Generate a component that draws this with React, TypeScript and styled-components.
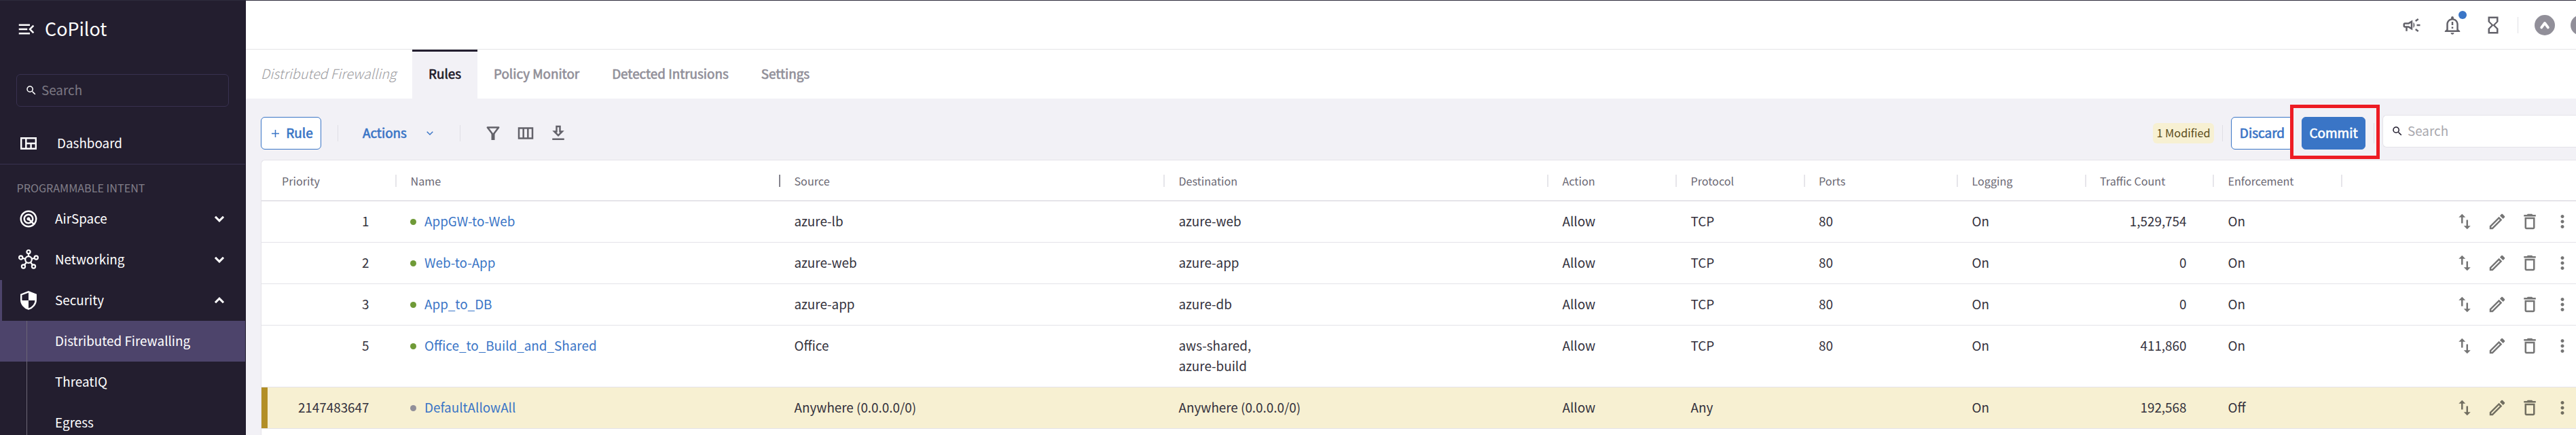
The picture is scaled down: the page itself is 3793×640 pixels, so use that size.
import React from 'react';
import styled, { createGlobalStyle, css } from 'styled-components';
import { MdRadar, MdMenuOpen, MdSearch, MdOutlineCampaign, MdOutlineNotificationImportant, MdHourglassEmpty } from 'react-icons/md';

const GlobalStyle = createGlobalStyle`
  *, *::before, *::after { box-sizing: border-box; }
  body {
    margin: 0;
    overflow: hidden;
    background: #f2f1f6;
    color: #33313c;
    font-family: "Noto Sans CJK SC", "Noto Sans", sans-serif;
    font-size: 18.85px;
    line-height: 30px;
  }
  svg { display: block; flex: none; }
`;

const semiBold = css`
  -webkit-text-stroke: 0.65px currentColor;
`;

const Page = styled.div`
  display: flex;
  height: 640px;
  border-top: 1px solid #2e2b3c;
  overflow: hidden;
`;

const Text = styled.span`
  display: block;
  padding-bottom: 2px;
  white-space: nowrap;
`;

/* Sidebar */

const Sidebar = styled.nav`
  display: flex;
  flex-direction: column;
  flex: none;
  width: 362px;
  background: #231e2f;
  border-right: 1px solid #1a1627;
  color: #fff;
  overflow: hidden;
`;

const Brand = styled.div`
  display: flex;
  align-items: center;
  flex: none;
  height: 84px;
  padding-left: 24px;
  gap: 12px;
  font-size: 26.9px;
`;

const SideSearch = styled.div`
  display: flex;
  align-items: center;
  flex: none;
  height: 48px;
  margin: 24px 24px 24px 24px;
  padding-left: 12px;
  gap: 6px;
  border: 1px solid #383150;
  border-radius: 6px;
  color: #7b7883;
  svg { color: #fff; }
`;

const NavItem = styled.div<{ $active?: boolean }>`
  display: flex;
  align-items: center;
  flex: none;
  height: 60px;
  padding: 0 31px 0 23px;
  border-left: 3px solid ${p => (p.$active ? '#4d446b' : 'transparent')};
`;

const NavIcon = styled.div<{ $gap?: number }>`
  display: flex;
  justify-content: center;
  flex: none;
  width: 32px;
  margin-right: ${p => p.$gap ?? 23}px;
`;

const NavChevron = styled.div`
  margin-left: auto;
`;

const SideRule = styled.div`
  flex: none;
  height: 1px;
  background: #383150;
`;

const SectionLabel = styled.div`
  flex: none;
  height: 50px;
  padding: 18px 0 0 24.5px;
  color: #817e89;
  font-size: 16.15px;
  line-height: 32px;
`;

const SubItem = styled.div<{ $selected?: boolean }>`
  display: flex;
  align-items: center;
  flex: none;
  height: 60px;
  padding-left: 39px;
  background: ${p => (p.$selected ? '#4d446b' : 'transparent')};
`;

const Guide = styled.div`
  align-self: stretch;
  width: 1px;
  margin-right: 41px;
  background: #6b6676;
`;

/* Main column */

const Main = styled.main`
  display: flex;
  flex-direction: column;
  flex: 1;
  min-width: 0;
  overflow: hidden;
`;

const TopBar = styled.header`
  display: flex;
  align-items: center;
  justify-content: flex-end;
  flex: none;
  height: 72px;
  padding-top: 1px;
  background: #fff;
  border-bottom: 1px solid #e4e4e7;
  color: #63626a;
`;

const TopIcon = styled.div<{ $last?: boolean }>`
  position: relative;
  margin-right: ${p => (p.$last ? 21 : 30)}px;
`;

const AlertDot = styled.span`
  position: absolute;
  top: -6px;
  right: -6px;
  width: 12px;
  height: 12px;
  border-radius: 50%;
  background: #3a75c6;
`;

const Divider = styled.div<{ $h?: number; $gap?: number }>`
  flex: none;
  width: 1px;
  height: ${p => p.$h ?? 24}px;
  margin-left: ${p => p.$gap ?? 0}px;
  background: #e0dfe5;
`;

const Disc = styled.div<{ $edge?: boolean }>`
  display: grid;
  place-items: center;
  flex: none;
  width: 30px;
  height: 30px;
  margin: ${p => (p.$edge ? '0 -22px 0 23px' : '0 0 0 24px')};
  border-radius: 50%;
  background: #918f99;
  color: #fff;
`;

const TabBar = styled.div`
  display: flex;
  flex: none;
  height: 72px;
  background: #fff;
`;

const TabTitle = styled.div`
  display: flex;
  align-items: center;
  width: 245px;
  padding-left: 22px;
  color: #9c9c9f;
  font-style: italic;
  font-weight: 300;
  font-size: 19.7px;
`;

const Tab = styled.div<{ $active?: boolean }>`
  display: flex;
  align-items: center;
  padding: 0 24px;
  color: ${p => (p.$active ? '#1d1a28' : '#918f99')};
  background: ${p => (p.$active ? '#f2f1f6' : 'transparent')};
  box-shadow: ${p => (p.$active ? 'inset 0 3px 0 #231e2f' : 'none')};
  ${semiBold}
`;

const Toolbar = styled.div`
  display: flex;
  align-items: center;
  flex: none;
  height: 90px;
  padding: 27px 0 15px 22px;
`;

const Button = styled.button<{ $primary?: boolean; $icon?: boolean; $width: number }>`
  display: flex;
  align-items: center;
  justify-content: center;
  flex: none;
  width: ${p => p.$width}px;
  height: 48px;
  padding: 0 0 0 ${p => (p.$icon ? 4 : 0)}px;
  gap: 10px;
  border: 1px solid #3a75c6;
  border-radius: 6px;
  background: ${p => (p.$primary ? '#3a75c6' : '#fff')};
  color: ${p => (p.$primary ? '#fff' : '#3a75c6')};
  font: inherit;
  font-size: 19px;
  ${semiBold}
`;

const ActionsMenu = styled.div`
  display: flex;
  align-items: center;
  width: 179px;
  padding: 0 39px 0 36px;
  justify-content: space-between;
  color: #3a75c6;
  ${semiBold}
`;

const ToolIcons = styled.div`
  display: flex;
  gap: 18px;
  margin-left: 33px;
  color: #63626a;
`;

const ToolbarEnd = styled.div`
  display: flex;
  align-items: center;
  gap: 12px;
  margin-left: auto;
`;

const Badge = styled.div`
  display: flex;
  align-items: center;
  justify-content: center;
  width: 90px;
  height: 30px;
  border-radius: 6px;
  background: #f7f0d2;
  color: #5b4d20;
  font-size: 16.3px;
`;

const CommitSlot = styled.div`
  position: relative;
`;

const Highlight = styled.div`
  position: absolute;
  inset: -18px -21px -14px -17px;
  border: 5px solid #ed1c24;
  pointer-events: none;
`;

const TableSearch = styled.div`
  display: flex;
  align-items: center;
  align-self: flex-start;
  width: 285px;
  height: 48px;
  margin-top: -3px;
  padding-left: 12px;
  gap: 6px;
  border: 1px solid #e4e3e9;
  border-right: 0;
  border-radius: 6px 0 0 6px;
  background: #fff;
  color: #a9a8ae;
  svg { color: #231e2f; }
`;

/* Table */

const Table = styled.section`
  flex: 1;
  margin-left: 22px;
  background: #fff;
  border: solid #e4e3e9;
  border-width: 1px 0 0 1px;
  border-radius: 6px 0 0 0;
`;

const columnTracks = css`
  display: grid;
  grid-template-columns: 199px 565px 566px 565px 189px 188.5px 225.5px 188.5px 188.5px 188.5px 1fr;
`;

const HeadRow = styled.div`
  ${columnTracks}
  align-items: center;
  height: 60px;
  border-bottom: 1px solid #cfced6;
  color: #6b6974;
  font-size: 16.15px;
  line-height: 18px;
`;

const HeadCell = styled.div<{ $strong?: boolean; $first?: boolean }>`
  height: 18px;
  padding-left: ${p => (p.$first ? 30 : 20.5)}px;
  border-right: 2px solid ${p => (p.$strong ? '#85838d' : '#e6e5ea')};
`;

const Row = styled.div<{ $modified?: boolean }>`
  ${columnTracks}
  padding: 14px 0 16px;
  border-bottom: 1px solid #e4e3e9;
  background: ${p => (p.$modified ? '#f7f0d2' : '#fff')};
  box-shadow: ${p => (p.$modified ? 'inset 9px 0 0 #b28f26' : 'none')};
`;

const Cell = styled.div<{ $numeric?: boolean }>`
  padding: ${p => (p.$numeric ? '0 40.5px 0 0' : '0 0 0 20.5px')};
  text-align: ${p => (p.$numeric ? 'right' : 'left')};
  white-space: pre-line;
`;

const NameCell = styled(Cell)`
  display: flex;
  gap: 12px;
  padding-left: 20px;
  color: #3a75c6;
`;

const Dot = styled.span<{ $muted?: boolean }>`
  width: 9px;
  height: 9px;
  margin-top: 12px;
  border-radius: 50%;
  background: ${p => (p.$muted ? '#918f99' : '#6f9a37')};
`;

const RowActions = styled.div`
  display: flex;
  justify-content: flex-end;
  gap: 18px;
  height: 30px;
  padding: 1px 5px 0 0;
  color: rgba(0, 0, 0, 0.54);
`;

const Glyph = ({ d }: { d: string }) => (
  <svg width="30" height="30" viewBox="0 0 24 24" fill="currentColor"><path d={d} /></svg>
);

const paths = {
  swap: 'M16 17.01V10h-2v7.01h-3L15 21l4-3.99h-3zM9 3 5 6.99h3V14h2V6.99h3L9 3z',
  edit: 'M14.06 9.02l.92.92L5.92 19H5v-.92l9.06-9.06M17.66 3c-.25 0-.51.1-.7.29l-1.83 1.83 3.75 3.75 1.83-1.83c.39-.39.39-1.02 0-1.41l-2.34-2.34c-.2-.2-.45-.29-.71-.29zm-3.6 3.19L3 17.25V21h3.75L17.81 9.94l-3.75-3.75z',
  trash: 'M6 19c0 1.1.9 2 2 2h8c1.1 0 2-.9 2-2V7H6v12zM8 9h8v10H8V9zm7.5-5l-1-1h-5l-1 1H5v2h14V4h-3.5z',
  more: 'M12 8c1.1 0 2-.9 2-2s-.9-2-2-2-2 .9-2 2 .9 2 2 2zm0 2c-1.1 0-2 .9-2 2s.9 2 2 2 2-.9 2-2-.9-2-2-2zm0 6c-1.1 0-2 .9-2 2s.9 2 2 2 2-.9 2-2-.9-2-2-2z',
  columns: 'M3 5v14h18V5H3zm5.33 12H5V7h3.33v10zm5.34 0h-3.33V7h3.33v10zM19 17h-3.33V7H19v10z',
  download: 'M19 9h-4V3H9v6H5l7 7 7-7zm-8 2V5h2v6h1.17L12 13.17 9.83 11H11zm-6 7h14v2H5z',
};

const Chevron = ({ up, size = 14, stroke = 3 }: { up?: boolean; size?: number; stroke?: number }) => (
  <svg width={size} height={size} viewBox="0 0 14 14" fill="none" stroke="currentColor" strokeWidth={stroke}>
    <path d={up ? 'M1 10.2 7 4.2 13 10.2' : 'M1 3.8 7 9.8 13 3.8'} />
  </svg>
);

const LogoMark = () => (
  <svg width="16" height="14" viewBox="0 0 16 14" fill="none" stroke="#fff" strokeWidth="3.8" strokeLinecap="round" strokeLinejoin="round">
    <path d="M3.2 10.400 8 4 12.800 10.400" />
  </svg>
);

const DashboardIcon = () => (
  <svg width="24" height="18" viewBox="0 0 24 18" fill="none" stroke="#fff" strokeWidth="2.4">
    <path d="M1.2 1.2h21.6v15.6H1.2zM8.3 1.2v15.6M8.3 9h14.5M15.6 9v7.8" />
  </svg>
);

const HubIcon = () => (
  <svg width="32" height="32" viewBox="0 0 32 32" fill="none" stroke="#fff" strokeWidth="2.2">
    <circle cx="16" cy="16" r="4.8" />
    <circle cx="16" cy="4.6" r="2.6" />
    <circle cx="4.7" cy="13" r="2.6" />
    <circle cx="27.3" cy="13" r="2.6" />
    <circle cx="8.5" cy="26" r="2.6" />
    <circle cx="23.5" cy="26" r="2.6" />
    <path d="M16 7v4.5M7.2 13.7l4.2 1.2M24.8 13.7l-4.2 1.2M10 23.8l3.2-4M22 23.8l-3.2-4" />
  </svg>
);

const ShieldIcon = () => (
  <svg width="24" height="28" viewBox="0 0 24 28">
    <path d="M12 1.3 22.8 5.5V13c0 6.4-4.4 11.7-10.8 13.7C5.6 24.7 1.2 19.4 1.2 13V5.5z" fill="none" stroke="#fff" strokeWidth="2.4" />
    <path d="M12 1v13h11V5.3zM12 14v13C6 25 1.5 20 1.5 14z" fill="#fff" />
  </svg>
);

const FunnelIcon = () => (
  <svg width="30" height="30" viewBox="0 0 30 30" fill="none" stroke="currentColor">
    <path d="M6.8 6.6h16.4L15.6 16.5h-1.2z" strokeWidth="2.5" strokeLinejoin="round" />
    <path d="M15 15v10" strokeWidth="5" />
  </svg>
);

const PlusIcon = () => (
  <svg width="11" height="11" viewBox="0 0 11 11" stroke="currentColor" strokeWidth="1.5">
    <path d="M5.5 0v11M0 5.5h11" />
  </svg>
);

type Rule = {
  priority: string; name: string; source: string; destination: string; protocol: string;
  ports: string; traffic: string; enforcement: string; modified?: boolean;
};

const rules: Rule[] = [
  { priority: '1', name: 'AppGW-to-Web', source: 'azure-lb', destination: 'azure-web', protocol: 'TCP', ports: '80', traffic: '1,529,754', enforcement: 'On' },
  { priority: '2', name: 'Web-to-App', source: 'azure-web', destination: 'azure-app', protocol: 'TCP', ports: '80', traffic: '0', enforcement: 'On' },
  { priority: '3', name: 'App_to_DB', source: 'azure-app', destination: 'azure-db', protocol: 'TCP', ports: '80', traffic: '0', enforcement: 'On' },
  { priority: '5', name: 'Office_to_Build_and_Shared', source: 'Office', destination: 'aws-shared,\nazure-build', protocol: 'TCP', ports: '80', traffic: '411,860', enforcement: 'On' },
  { priority: '2147483647', name: 'DefaultAllowAll', source: 'Anywhere (0.0.0.0/0)', destination: 'Anywhere (0.0.0.0/0)', protocol: 'Any', ports: '', traffic: '192,568', enforcement: 'Off', modified: true },
];

const headings = ['Priority', 'Name', 'Source', 'Destination', 'Action', 'Protocol', 'Ports', 'Logging', 'Traffic Count', 'Enforcement'];

export default function App() {
  return (
    <>
      <GlobalStyle />
      <Page>
        <Sidebar>
          <Brand><MdMenuOpen size={30} /><Text>CoPilot</Text></Brand>
          <SideSearch><MdSearch size={18} /><Text>Search</Text></SideSearch>
          <NavItem><NavIcon $gap={26}><DashboardIcon /></NavIcon><Text>Dashboard</Text></NavItem>
          <SideRule />
          <SectionLabel>PROGRAMMABLE INTENT</SectionLabel>
          <NavItem><NavIcon><MdRadar size={30} /></NavIcon><Text>AirSpace</Text><NavChevron><Chevron /></NavChevron></NavItem>
          <NavItem><NavIcon><HubIcon /></NavIcon><Text>Networking</Text><NavChevron><Chevron /></NavChevron></NavItem>
          <NavItem $active><NavIcon><ShieldIcon /></NavIcon><Text>Security</Text><NavChevron><Chevron up /></NavChevron></NavItem>
          <SubItem $selected><Guide /><Text>Distributed Firewalling</Text></SubItem>
          <SubItem><Guide /><Text>ThreatIQ</Text></SubItem>
          <SubItem><Guide /><Text>Egress</Text></SubItem>
        </Sidebar>
        <Main>
          <TopBar>
            <TopIcon><MdOutlineCampaign size={30} /></TopIcon>
            <TopIcon><MdOutlineNotificationImportant size={30} /><AlertDot /></TopIcon>
            <TopIcon $last><MdHourglassEmpty size={30} /></TopIcon>
            <Divider />
            <Disc><LogoMark /></Disc>
            <Disc $edge />
          </TopBar>
          <TabBar>
            <TabTitle><Text>Distributed Firewalling</Text></TabTitle>
            <Tab $active><Text>Rules</Text></Tab>
            <Tab><Text>Policy Monitor</Text></Tab>
            <Tab><Text>Detected Intrusions</Text></Tab>
            <Tab><Text>Settings</Text></Tab>
          </TabBar>
          <Toolbar>
            <Button $width={89} $icon><PlusIcon /><Text>Rule</Text></Button>
            <Divider $gap={24} />
            <ActionsMenu><Text>Actions</Text><Chevron size={10} stroke={2} /></ActionsMenu>
            <Divider />
            <ToolIcons><FunnelIcon /><Glyph d={paths.columns} /><Glyph d={paths.download} /></ToolIcons>
            <ToolbarEnd>
              <Badge><Text>1 Modified</Text></Badge>
              <Divider />
              <Button $width={92}><Text>Discard</Text></Button>
              <CommitSlot>
                <Button $primary $width={94}><Text>Commit</Text></Button>
                <Highlight />
              </CommitSlot>
              <Divider $h={30} />
              <TableSearch><MdSearch size={18} /><Text>Search</Text></TableSearch>
            </ToolbarEnd>
          </Toolbar>
          <Table>
            <HeadRow>
              {headings.map((h, i) => <HeadCell key={h} $first={i === 0} $strong={h === 'Name'}>{h}</HeadCell>)}
            </HeadRow>
            {rules.map(r => (
              <Row key={r.priority} $modified={r.modified}>
                <Cell $numeric>{r.priority}</Cell>
                <NameCell><Dot $muted={r.modified} />{r.name}</NameCell>
                <Cell>{r.source}</Cell>
                <Cell>{r.destination}</Cell>
                <Cell>Allow</Cell>
                <Cell>{r.protocol}</Cell>
                <Cell>{r.ports}</Cell>
                <Cell>On</Cell>
                <Cell $numeric>{r.traffic}</Cell>
                <Cell>{r.enforcement}</Cell>
                <RowActions>
                  <Glyph d={paths.swap} /><Glyph d={paths.edit} /><Glyph d={paths.trash} /><Glyph d={paths.more} />
                </RowActions>
              </Row>
            ))}
          </Table>
        </Main>
      </Page>
    </>
  );
}
